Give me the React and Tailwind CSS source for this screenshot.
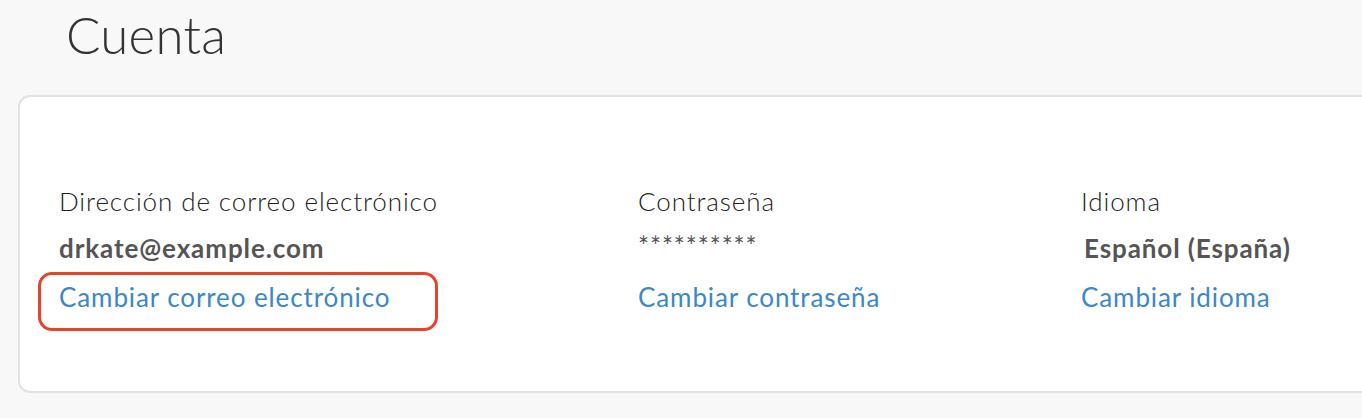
export default function App() {
  return (
    <div className="min-h-[418px] w-[1362px] overflow-hidden bg-[#f8f8f8] font-['Lato',sans-serif]">
      <h1 className="pl-[66px] pt-[7px] text-[51px] font-light leading-[56px] tracking-[0.3px] text-[#333]">Cuenta</h1>
      <div className="ml-[18px] mt-[32px] h-[298px] w-[1400px] rounded-[12px] border-2 border-[#e2e2e2] bg-white pl-[39px] pt-[88px]">
        <div className="grid grid-cols-[579px_443px_1fr] text-[26px] leading-[32px] tracking-[0.9px]">
          <div className="relative">
            <div className="font-light text-[#222]">Dirección de correo electrónico</div>
            <div className="mt-[15px] font-bold text-[#555]">drkate@example.com</div>
            <div className="mt-[17px] text-[#3b87c8]">Cambiar correo electrónico</div>
            <div className="absolute left-[-21px] top-[87px] h-[59px] w-[400px] rounded-[14px] border-[3px] border-[#e5432c]"></div>
          </div>
          <div>
            <div className="font-light text-[#222]">Contraseña</div>
            <div className="mt-[13px] text-[#555]">**********</div>
            <div className="mt-[19px] text-[#3b87c8]">Cambiar contraseña</div>
          </div>
          <div>
            <div className="font-light text-[#222]">Idioma</div>
            <div className="ml-[3px] mt-[15px] font-bold text-[#555]">Español (España)</div>
            <div className="mt-[17px] text-[#3b87c8]">Cambiar idioma</div>
          </div>
        </div>
      </div>
    </div>
  );
}
